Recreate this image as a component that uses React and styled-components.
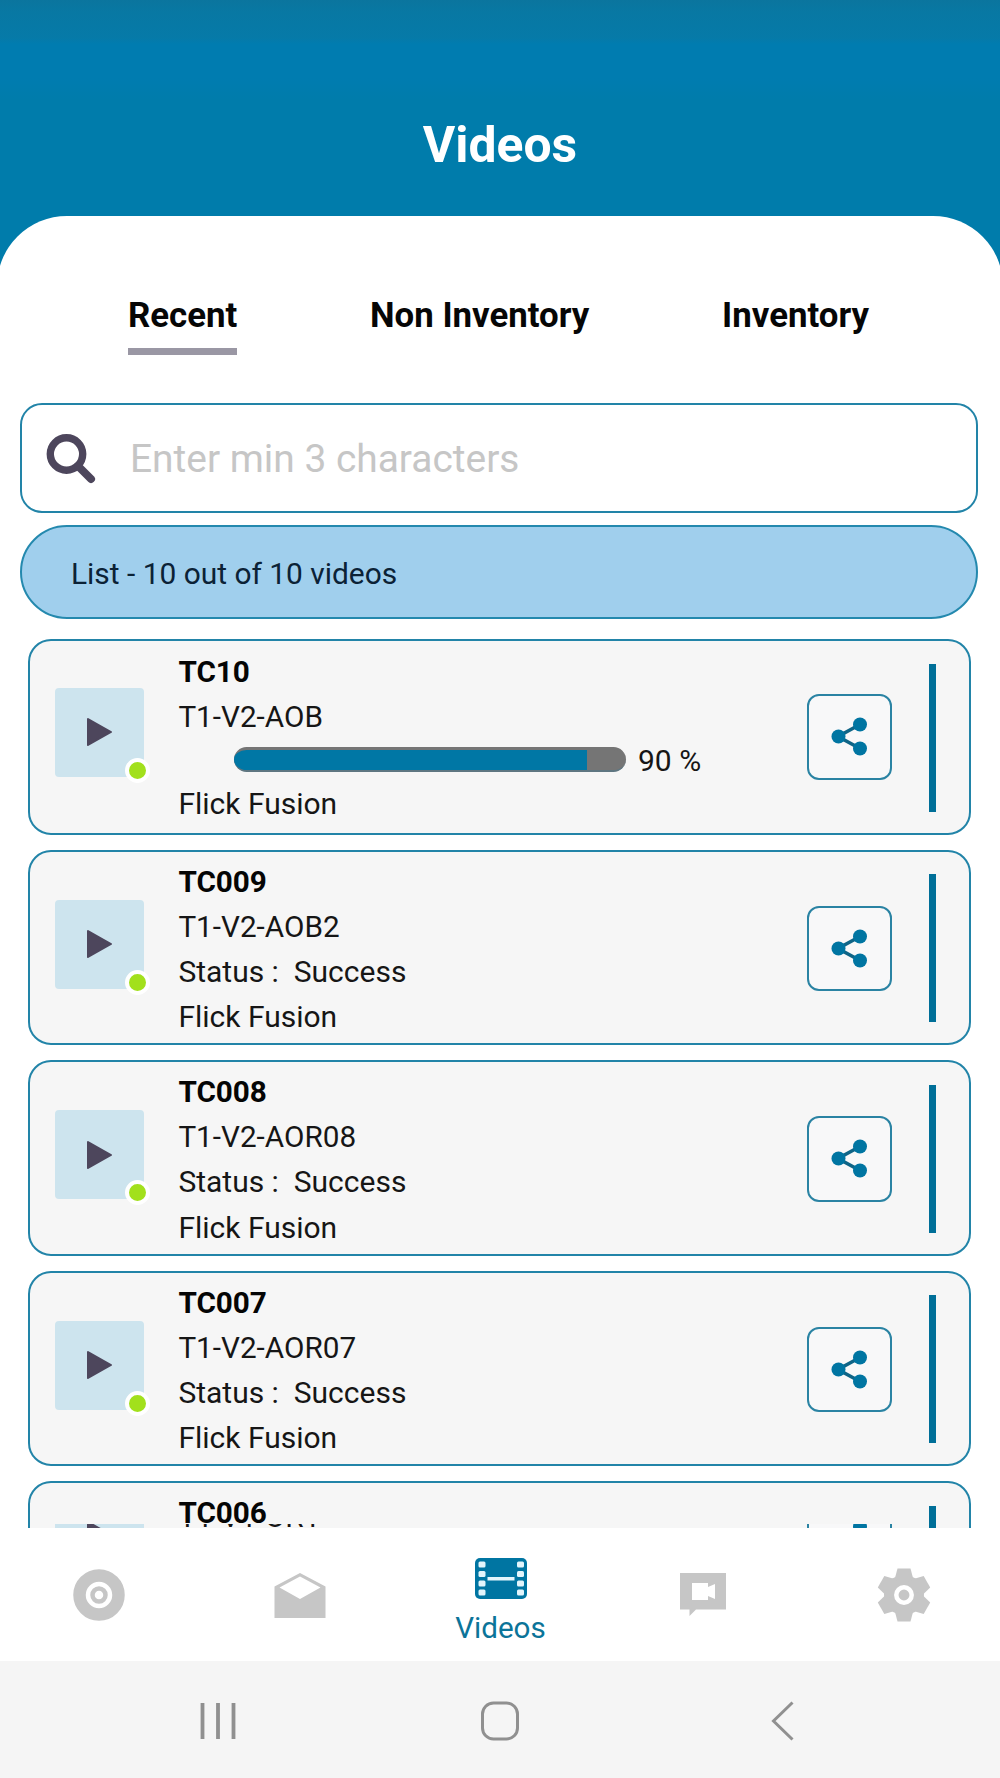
import React from "react";
import styled, { createGlobalStyle } from "styled-components";

const Global = createGlobalStyle`
  * { box-sizing: border-box; }
  body { margin: 0; background: #fff; font-family: Roboto, sans-serif; }
`;

const Screen = styled.div`
  width: 1000px;
  height: 1778px;
  display: flex;
  flex-direction: column;
  overflow: hidden;
  background: #007cab;
`;

const Header = styled.header`
  flex: none;
  height: 216px;
  padding-top: 116px;
  background: linear-gradient(#0b759e 0, #0878a3 12px, #067aa8 38px, #007cb0 44px, #007cb0 78px, #007cab 100px);
  text-align: center;
`;

const Title = styled.h1`
  margin: 0;
  font-size: 49.8px;
  line-height: 59px;
  font-weight: 700;
  color: #fff;
`;

const Panel = styled.main`
  flex: none;
  height: 1312px;
  margin: 0 -3px;
  padding: 0 3px;
  overflow: hidden;
  background: #fff;
  border-radius: 70px 70px 0 0;
`;

const Tabs = styled.nav`
  display: flex;
  justify-content: space-between;
  padding: 79px 131px 0 128px;
  height: 187px;
`;

const Tab = styled.button`
  height: 59.5px;
  padding: 0;
  border: 0;
  border-bottom: 7px solid ${(p) => (p.$active ? "#9a97a4" : "transparent")};
  background: none;
  font: 700 34.8px/40px Roboto, sans-serif;
  color: #060606;
  display: flex;
  align-items: flex-start;
`;

const Search = styled.label`
  display: flex;
  align-items: center;
  height: 110px;
  margin: 0 22px 12px 20px;
  padding: 2px 0 0 24px;
  gap: 34px;
  border: 2px solid #2284a8;
  border-radius: 22px;
`;

const SearchInput = styled.input`
  flex: 1;
  padding: 0;
  border: 0;
  outline: 0;
  background: none;
  font: 400 38.9px/48px Roboto, sans-serif;
  color: #222;
  &::placeholder { color: #c6c6c6; opacity: 1; }
`;

const Summary = styled.div`
  display: flex;
  align-items: center;
  height: 94px;
  margin: 0 22px 20px 20px;
  padding: 2px 0 0 49px;
  border: 2px solid #2489ae;
  border-radius: 47px;
  background: #a0cfed;
  font-size: 29.9px;
  color: #0b2236;
`;

const List = styled.div`
  display: flex;
  flex-direction: column;
  gap: 15px;
  padding: 0 29px 0 28px;
`;

const Peek = styled.div`
  height: 43px;
  overflow: hidden;
`;

const Sliver = styled.div`
  height: 4px;
  margin-top: -15px;
  overflow: hidden;
  display: flex;
  align-items: flex-end;
`;

const Shifted = styled.div`
  flex: 1;
  height: 195.5px;
  margin-bottom: -107.5px;
`;

const Card = styled.article`
  display: flex;
  height: 195.5px;
  padding: 0 33px 0 25px;
  border: 2px solid #2284a8;
  border-radius: 23px;
  background: #f6f6f6;
`;

const Thumb = styled.div`
  position: relative;
  flex: none;
  width: 89px;
  height: 89px;
  margin-top: ${(p) => (p.$uploading ? 46.6 : 48)}px;
  border-radius: 4px;
  background: #cde4ee;
  display: grid;
  place-items: center;
`;

const Dot = styled.span`
  position: absolute;
  left: 70px;
  top: 70px;
  width: 25px;
  height: 25px;
  border: 4px solid #fff;
  border-radius: 50%;
  background: #a2e01c;
`;

const Info = styled.div`
  flex: 1;
  margin-left: 34.4px;
  padding-top: ${(p) => (p.$uploading ? 8.2 : 7)}px;
  font-size: 30px;
  line-height: 45.2px;
  color: #161616;
  white-space: pre;
`;

const Name = styled.div`
  min-height: 45.2px;
  font-size: 29.7px;
  font-weight: 700;
  color: #050505;
`;

const Line = styled.div``;

const Code = styled(Line)`
  font-size: 29.7px;
`;

const Progress = styled.div`
  display: flex;
  align-items: center;
  gap: 12px;
  height: 41px;
  padding-left: 55.6px;
`;

const Track = styled.div`
  width: 392px;
  height: 25px;
  margin-top: -2px;
  border-radius: 13px;
  border-top: 3px solid #757575;
  border-bottom: 2px solid #5f7681;
  background: #757575;
  overflow: hidden;
`;

const Fill = styled.div`
  height: 100%;
  background: #0077a5;
`;

const ShareButton = styled.button`
  flex: none;
  width: 85.5px;
  height: 85.5px;
  margin: ${(p) => (p.$uploading ? 53 : 54)}px 36.5px 0 0;
  padding: 0;
  border: 2px solid #2a83a3;
  border-radius: 12px;
  background: #f8f8f9;
`;

const Accent = styled.span`
  flex: none;
  width: 7.5px;
  height: 148px;
  margin-top: 22.5px;
  background: #006f98;
`;

const TabBar = styled.nav`
  flex: none;
  display: grid;
  grid-template-columns: 197px 205px 197px 207px 196px;
  height: 133px;
  background: #fff;
`;

const NavItem = styled.button`
  display: flex;
  flex-direction: column;
  align-items: center;
  padding: ${(p) => p.$top}px 0 0;
  border: 0;
  background: none;
  font: 400 29.6px/34px Roboto, sans-serif;
  color: #0b7499;
`;

const NavLabel = styled.span`
  margin-top: 12px;
`;

const SystemBar = styled.footer`
  flex: 1;
  display: grid;
  grid-template-columns: 282px 289px 24px;
  align-items: center;
  padding: 2px 0 0 199px;
  background: #f5f5f5;
`;

const SearchIcon = () => (
  <svg width="50" height="50" viewBox="0 0 50 50" fill="none" stroke="#4d465c">
    <circle cx="20.5" cy="20" r="16.2" strokeWidth="7.4" />
    <path d="M32 32 45 45" strokeWidth="8" strokeLinecap="round" />
  </svg>
);

const PlayIcon = () => (
  <svg width="27" height="30" viewBox="0 0 27 30">
    <path d="M2 2 25 15 2 28Z" fill="#4d465c" stroke="#4d465c" strokeWidth="2" strokeLinejoin="round" />
  </svg>
);

const ShareSvg = styled.svg`
  display: block;
`;

const ShareIcon = () => (
  <ShareSvg width="81" height="81" viewBox="0 0 81 81" fill="#0075a2">
    <path d="M51 28.500 29 40.500 51 52.500" fill="none" stroke="#0f6587" strokeWidth="3.6" />
    <circle cx="29.500" cy="40.500" r="7" />
    <circle cx="51" cy="28.500" r="7" />
    <circle cx="51" cy="52.500" r="7" />
  </ShareSvg>
);

const DiscIcon = () => (
  <svg width="52" height="52" viewBox="0 0 52 52" fill="none">
    <circle cx="26" cy="26" r="19.500" stroke="#c6c6c6" strokeWidth="12.500" />
    <circle cx="26" cy="26" r="6.500" stroke="#c6c6c6" strokeWidth="4.500" />
  </svg>
);

const MailIcon = () => (
  <svg width="52" height="46" viewBox="0 0 52 46">
    <path fillRule="evenodd" fill="#c6c6c6" d="M26 0 51.500 13.500V45H.5V13.500ZM26 3.500 5.500 14.500 26 26 46.500 14.500Z" />
  </svg>
);

const FilmIcon = () => (
  <svg width="52" height="41" viewBox="0 0 52 41">
    <rect width="52" height="41" rx="5" fill="#0075a2" />
    <g fill="#e2f5fc">
      {[3.5, 13, 22.5, 31.5].map((y) => (
        <React.Fragment key={y}>
          <rect x="3.500" y={y} width="7" height="6" rx="1.500" />
          <rect x="42" y={y} width="7" height="6" rx="1.500" />
        </React.Fragment>
      ))}
      <rect x="12.500" y="19" width="27" height="3.500" />
    </g>
  </svg>
);

const ChatIcon = () => (
  <svg width="46" height="43" viewBox="0 0 46 43">
    <path
      fillRule="evenodd"
      fill="#c6c6c6"
      d="M0 0H46V36.500H16L9.500 43V36.500H0ZM12 10V27H28V23L35 26V11L28 14V10Z"
    />
  </svg>
);

const GearIcon = () => (
  <svg width="54" height="54" viewBox="0 0 54 54">
    <g fill="#c6c6c6">
      <circle cx="27" cy="27" r="20" />
      {[0, 60, 120].map((a) => (
        <path key={a} transform={`rotate(${a} 27 27)`} d="M20.500 0.500H33.500L36 10V44L33.500 53.500H20.500L18 44V10Z" />
      ))}
    </g>
    <circle cx="27" cy="27" r="7.700" fill="#c6c6c6" stroke="#fff" strokeWidth="4.500" />
  </svg>
);

const RecentsIcon = () => (
  <svg width="38" height="38" viewBox="0 0 38 38" stroke="#909090" strokeWidth="3.800">
    <path d="M3.500 1V37M19 1V37M34.500 1V37" />
  </svg>
);

const HomeIcon = () => (
  <svg width="38" height="40" viewBox="0 0 38 40" fill="none" stroke="#909090" strokeWidth="3">
    <rect x="1.500" y="2" width="35" height="36" rx="11" />
  </svg>
);

const BackIcon = () => (
  <svg width="24" height="40" viewBox="0 0 24 40" fill="none" stroke="#909090" strokeWidth="3">
    <path d="M22.500 1.500 3.500 20 22.500 38.500" />
  </svg>
);

const videos = [
  { name: "TC10", code: "T1-V2-AOB", progress: 90, provider: "Flick Fusion" },
  { name: "TC009", code: "T1-V2-AOB2", status: "Success", provider: "Flick Fusion" },
  { name: "TC008", code: "T1-V2-AOR08", status: "Success", provider: "Flick Fusion" },
  { name: "TC007", code: "T1-V2-AOR07", status: "Success", provider: "Flick Fusion" },
];

function VideoCard({ video }) {
  const uploading = video.progress !== undefined;
  return (
    <Card>
      <Thumb $uploading={uploading}>
        <PlayIcon />
        <Dot />
      </Thumb>
      <Info $uploading={uploading}>
        <Name>{video.name}</Name>
        {video.code && <Code>{video.code}</Code>}
        {uploading && (
          <Progress>
            <Track>
              <Fill style={{ width: `${video.progress}%` }} />
            </Track>
            <span>{video.progress} %</span>
          </Progress>
        )}
        {video.status && <Line>{`Status :  ${video.status}`}</Line>}
        {video.provider && <Line>{video.provider}</Line>}
      </Info>
      <ShareButton $uploading={uploading} aria-label="Share">
        <ShareIcon />
      </ShareButton>
      <Accent />
    </Card>
  );
}

export default function App() {
  return (
    <Screen>
      <Global />
      <Header>
        <Title>Videos</Title>
      </Header>
      <Panel>
        <Tabs>
          <Tab $active>Recent</Tab>
          <Tab>Non Inventory</Tab>
          <Tab>Inventory</Tab>
        </Tabs>
        <Search>
          <SearchIcon />
          <SearchInput placeholder="Enter min 3 characters" />
        </Search>
        <Summary>List - 10 out of 10 videos</Summary>
        <List>
          {videos.map((v) => (
            <VideoCard key={v.name} video={v} />
          ))}
          <Peek>
            <VideoCard video={{ name: "TC006" }} />
          </Peek>
          <Sliver aria-hidden="true">
            <Shifted>
              <VideoCard video={{ code: "T1-V1-OR1" }} />
            </Shifted>
          </Sliver>
        </List>
      </Panel>
      <TabBar>
        <NavItem $top={41} aria-label="Home"><DiscIcon /></NavItem>
        <NavItem $top={45} aria-label="Inbox"><MailIcon /></NavItem>
        <NavItem $top={30}>
          <FilmIcon />
          <NavLabel>Videos</NavLabel>
        </NavItem>
        <NavItem $top={45} aria-label="Chat"><ChatIcon /></NavItem>
        <NavItem $top={40} aria-label="Settings"><GearIcon /></NavItem>
      </TabBar>
      <SystemBar>
        <RecentsIcon />
        <HomeIcon />
        <BackIcon />
      </SystemBar>
    </Screen>
  );
}
